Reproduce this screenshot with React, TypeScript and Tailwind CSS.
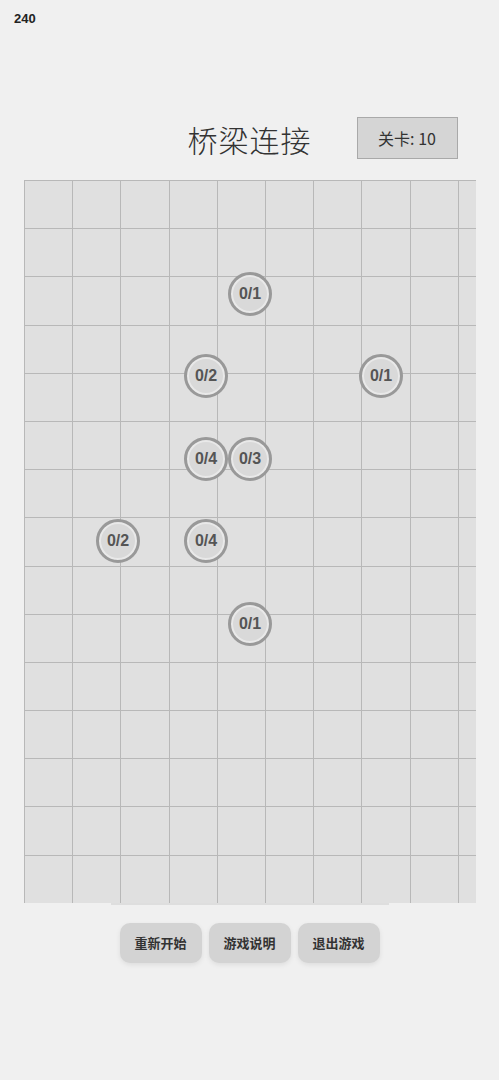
import React from 'react';

interface Island {
  x: number;
  y: number;
  need: number;
}

// centres measured relative to the board's top-left corner
const islands: Island[] = [
  { x: 226, y: 114, need: 1 },
  { x: 182, y: 196, need: 2 },
  { x: 357, y: 196, need: 1 },
  { x: 182, y: 279, need: 4 },
  { x: 226, y: 279, need: 3 },
  { x: 94, y: 361, need: 2 },
  { x: 182, y: 361, need: 4 },
  { x: 226, y: 444, need: 1 },
];

const COLS = 10;
const ROWS = 15;
const cells = Array.from({ length: COLS * ROWS }, (_, i) => i);

const Node: React.FC<{ island: Island }> = ({ island }) => (
  // -1 because the board's border sits outside the positioning box
  <div
    className="absolute w-[44px] h-[44px] rounded-full border-[3px] border-[#999] bg-[#d9d9d9] shadow-[inset_0_0_0_2px_#e9e9e9] flex items-center justify-center"
    style={{ left: island.x - 23, top: island.y - 23 }}
  >
    <span className="text-[16px] font-bold text-[#555] font-['Liberation_Sans',Arial,sans-serif]">0/{island.need}</span>
  </div>
);

const App: React.FC = () => {
  return (
    <div className="w-[499px] h-[1080px] bg-[#f0f0f0] font-['Noto_Sans_CJK_SC','Liberation_Sans',sans-serif] overflow-hidden">
      <div className="pl-[14px] pt-[11px] h-[28px] text-[13px] leading-[16px] font-black text-[#222] font-['Liberation_Sans',Arial,sans-serif]">240</div>

      <div className="grid grid-cols-[1fr_auto_1fr] items-center mt-[90px] h-[42px]">
        <div />
        <h1 className="text-[30px] leading-[42px] text-[#333] font-light tracking-[1px]">桥梁连接</h1>
        <div className="flex">
          <div className="ml-[45px] -mt-[2px] w-[101px] h-[42px] bg-[#d5d5d5] border border-[#a9a9a9] flex items-center justify-center text-[16px] text-[#333]">
            关卡: 10
          </div>
        </div>
      </div>

      <div className="relative mx-[24px] mt-[20px] w-[452px] h-[723px] overflow-hidden border-t border-l border-[#b8b8b8] bg-[#e0e0e0]">
        <div className="grid grid-cols-[repeat(10,48.2px)] grid-rows-[repeat(15,48.2px)]">
          {cells.map(i => (
            <div key={i} className="border-r border-b border-[#b8b8b8]" />
          ))}
        </div>
        {islands.map((island, i) => (
          <Node key={i} island={island} />
        ))}
      </div>
      <div className="mx-auto w-[278px] h-[2px] bg-[#dedede]" />

      <div className="flex justify-center gap-[7px] mt-[18px]">
        {['重新开始', '游戏说明', '退出游戏'].map(label => (
          <button
            key={label}
            className="w-[82px] h-[40px] rounded-[10px] bg-[#d3d3d3] shadow-[0_2px_5px_rgba(0,0,0,0.08)] text-[13px] font-bold text-[#333]"
          >
            {label}
          </button>
        ))}
      </div>
    </div>
  );
};

export default App;
